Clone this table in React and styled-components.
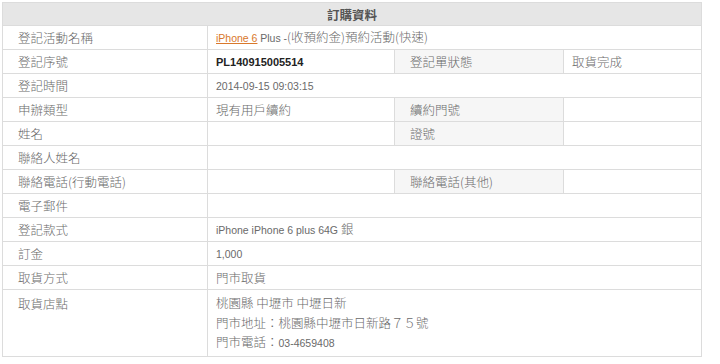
import React from 'react';
import styled, { createGlobalStyle } from 'styled-components';

const GlobalStyle = createGlobalStyle`
  body {
    margin: 0;
    background: #ffffff;
    font-family: "Noto Sans CJK TC", "Liberation Sans", sans-serif;
  }
`;

const Page = styled.div`
  padding: 2px;
  width: 699px;
`;

const Table = styled.table`
  width: 699px;
  border-collapse: collapse;
  table-layout: fixed;
  border: 1px solid #dcdcdc;
  font-size: 12.5px;
  font-weight: 300;
  color: #6a6a6a;
`;

const Head = styled.th`
  height: 22px;
  padding: 0;
  background: #e6e6e6;
  color: #555555;
  font-size: 12.5px;
  font-weight: bold;
  text-align: center;
  border: 1px solid #dcdcdc;
`;

const Row = styled.tr`
  height: 24px;
`;

const Label = styled.td`
  padding: ${(p) => (p.$top ? '4px' : '0')} 0 0 15px;
  background: ${(p) => (p.$side ? '#f6f6f6' : '#ffffff')};
  border: 1px solid #dcdcdc;
  vertical-align: ${(p) => (p.$top ? 'top' : 'middle')};
  line-height: 19px;
  white-space: nowrap;
`;

const Value = styled.td`
  padding: ${(p) => (p.$stack ? '3px 8px 2px' : '0 8px')};
  border: 1px solid #dcdcdc;
  line-height: ${(p) => (p.$stack ? '19.5px' : '19px')};
  white-space: nowrap;
`;

// latin text runs a size smaller than the CJK glyphs around it
const Latin = styled.span`
  font-family: "Liberation Sans", sans-serif;
  font-size: ${(p) => (p.$bold ? '11px' : '10.5px')};
  font-weight: ${(p) => (p.$bold ? 'bold' : 'normal')};
  color: ${(p) => (p.$bold ? '#222222' : 'inherit')};
`;

const Link = styled.a`
  color: #d9782b;
  text-decoration: underline;
  font-family: "Liberation Sans", sans-serif;
  font-size: 10.5px;
  font-weight: normal;
`;

const Line = styled.div``;

const simpleRows = [
  ['聯絡人姓名', ''],
  ['聯絡電話(行動電話)', '', '聯絡電話(其他)', ''],
];

function App() {
  return (
    <Page>
      <GlobalStyle />
      <Table>
        <colgroup>
          <col style={{ width: 205 }} />
          <col style={{ width: 187 }} />
          <col style={{ width: 169 }} />
          <col style={{ width: 138 }} />
        </colgroup>
        <thead>
          <tr>
            <Head colSpan={4}>訂購資料</Head>
          </tr>
        </thead>
        <tbody>
          <Row>
            <Label>登記活動名稱</Label>
            <Value colSpan={3}>
              <Link href="#">iPhone 6</Link> <Latin>Plus -</Latin>(收預約金)預約活動(快速)
            </Value>
          </Row>
          <Row>
            <Label>登記序號</Label>
            <Value><Latin $bold>PL140915005514</Latin></Value>
            <Label $side>登記單狀態</Label>
            <Value>取貨完成</Value>
          </Row>
          <Row>
            <Label>登記時間</Label>
            <Value colSpan={3}><Latin>2014-09-15 09:03:15</Latin></Value>
          </Row>
          <Row>
            <Label>申辦類型</Label>
            <Value>現有用戶續約</Value>
            <Label $side>續約門號</Label>
            <Value />
          </Row>
          <Row>
            <Label>姓名</Label>
            <Value />
            <Label $side>證號</Label>
            <Value />
          </Row>
          {simpleRows.map((r) =>
            r.length === 2 ? (
              <Row key={r[0]}>
                <Label>{r[0]}</Label>
                <Value colSpan={3}>{r[1]}</Value>
              </Row>
            ) : (
              <Row key={r[0]}>
                <Label>{r[0]}</Label>
                <Value>{r[1]}</Value>
                <Label $side>{r[2]}</Label>
                <Value>{r[3]}</Value>
              </Row>
            )
          )}
          <Row>
            <Label>電子郵件</Label>
            <Value colSpan={3} />
          </Row>
          <Row>
            <Label>登記款式</Label>
            <Value colSpan={3}><Latin>iPhone iPhone 6 plus 64G </Latin>銀</Value>
          </Row>
          <Row>
            <Label>訂金</Label>
            <Value colSpan={3}><Latin>1,000</Latin></Value>
          </Row>
          <Row>
            <Label>取貨方式</Label>
            <Value colSpan={3}>門市取貨</Value>
          </Row>
          <Row>
            <Label $top>取貨店點</Label>
            <Value colSpan={3} $stack>
              <Line>桃園縣 中壢市 中壢日新</Line>
              <Line>門市地址：桃園縣中壢市日新路７５號</Line>
              <Line>門市電話：<Latin>03-4659408</Latin></Line>
            </Value>
          </Row>
        </tbody>
      </Table>
    </Page>
  );
}

export default App;
